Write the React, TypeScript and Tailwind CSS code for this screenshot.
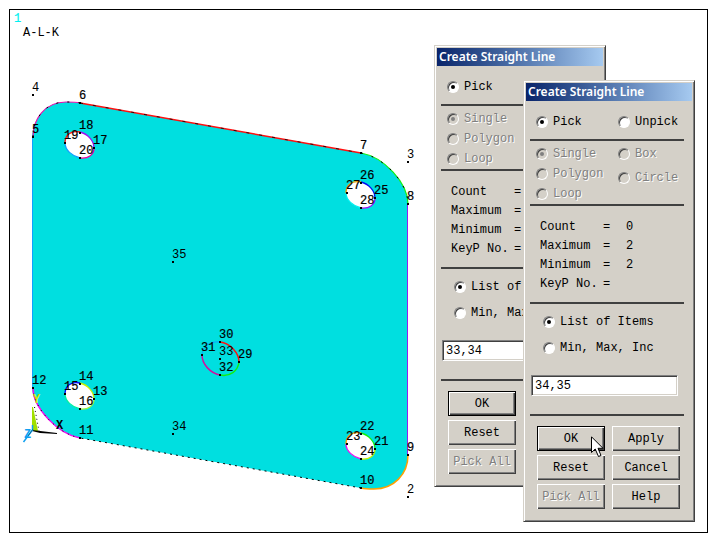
import React, { useId } from 'react';

interface PickerDialogProps {
  items: string;
  className: string;
}

interface RadioProps {
  name: string;
  label: string;
  checked?: boolean;
  disabled?: boolean;
}

const keypoints: [string, number, number][] = [
  ['2', 408, 497], ['3', 408, 162], ['4', 33, 95], ['5', 33, 137],
  ['6', 80, 103], ['7', 361, 153], ['8', 408, 204], ['9', 408, 455],
  ['10', 361, 488], ['11', 80, 438], ['12', 33, 388],
  ['13', 94, 399], ['14', 80, 384], ['15', 65, 394], ['16', 80, 409],
  ['17', 94, 148], ['18', 80, 133], ['19', 65, 143], ['20', 80, 158],
  ['21', 375, 449], ['22', 361, 434], ['23', 347, 444], ['24', 361, 459],
  ['25', 375, 198], ['26', 361, 183], ['27', 347, 193], ['28', 361, 208],
  ['29', 239, 362], ['30', 220, 342], ['31', 202, 355], ['32', 220, 375],
  ['33', 220, 359], ['34', 173, 434], ['35', 173, 262],
];

// Keypoints that belong to no line are drawn lighter
const freePoints = ['2', '3', '4', '33', '34', '35'];

// Arc colours run clockwise from the top keypoint of each hole
const holes = [
  { x: 80, y: 145, colors: ['#a010f0', '#f000a0', '#10a0ff', '#ff1010'] },
  { x: 80, y: 396, colors: ['#c8f000', '#a0f040', '#00f0a0', '#0000f0'] },
  { x: 361, y: 195, colors: ['#0010f0', '#a010f0', '#00f0f0', '#f0a000'] },
  { x: 361, y: 446, colors: ['#10f010', '#c8f000', '#f010f0', '#ffa000'] },
];

const holeArcs = [
  'M0 -13C8 -11 14 -4 14 3',
  'M14 3C14 10 8 14 0 13',
  'M0 13C-8 11 -15 5 -15 -2',
  'M-15 -2C-15 -10 -9 -15 0 -13',
];

const Model: React.FC = () => (
  <svg
    className="block h-[522px] w-[424px]"
    viewBox="10 10 424 522"
    fill="none"
    role="img"
    aria-label="Area model with keypoints"
  >
    <path
      fill="#00dfe0"
      d="M32 137C33 120 44 102 66 102C71 102 76 102 80 103L361 153C384 157 408 183 408 204V455C408 474 394 489 374 489C369 489 365 489 361 488L80 438C58 434 33 408 32 388Z"
    />

    {/* Outline */}
    <path stroke="#10a0ff" d="M32.5 137V388" />
    <path stroke="#f010b0" strokeWidth="1.2" d="M33 137C33 120 44 102 66 102C71 102 76 102 80 103" />
    <path stroke="#ff1010" strokeWidth="1.5" d="M80 103L361 153" />
    <path stroke="#10f010" strokeWidth="1.2" d="M361 153C384 157 408 183 408 204" />
    <path stroke="#9020f0" d="M407.5 204V455" />
    <path stroke="#ffa000" strokeWidth="1.5" d="M408 455C408 474 394 489 374 489C369 489 365 489 361 488" />
    <path stroke="#f010f0" strokeWidth="1.5" d="M80 438C58 434 33 408 33 388" />
    <path
      stroke="#000"
      strokeDasharray="2 9"
      d="M33 137C33 120 44 102 66 102C71 102 76 102 80 103M361 153C384 157 408 183 408 204"
    />
    <path stroke="#000" strokeWidth="0.8" strokeDasharray="3 10" d="M80 103L361 153" />
    <path stroke="#000" strokeDasharray="2 4" d="M361 488L80 438" />
    <path stroke="#000" strokeDasharray="1 5" d="M80 438C58 434 33 408 33 388" />

    {holes.map((hole) => (
      <g key={`${hole.x}-${hole.y}`} transform={`translate(${hole.x} ${hole.y})`}>
        <path fill="#fff" d="M0 -13C8 -11 14 -4 14 3C14 10 8 14 0 13C-8 11 -15 5 -15 -2C-15 -10 -9 -15 0 -13" />
        {holeArcs.map((d, i) => (
          <path key={d} d={d} stroke={hole.colors[i]} strokeWidth="1.3" />
        ))}
      </g>
    ))}

    {/* Inner circle */}
    <path stroke="#ff1010" strokeWidth="1.5" d="M220 342C230 343 239 353 239 362" />
    <path stroke="#10f010" strokeWidth="1.5" d="M239 362C238 371 230 377 220 375" />
    <path stroke="#d010a0" strokeWidth="1.5" d="M220 375C210 373 202 364 202 355" />
    <path stroke="#10a0ff" d="M202 355C203 346 209 341 220 342" />

    {/* Triad */}
    <path fill="#a0e000" d="M32 407H33L38 431H32Z" />
    <path stroke="#000" strokeDasharray="1 3" d="M34.5 407L39 431" />
    <path fill="#000" d="M32 430L57 433V434L40 433L32 431Z" />
    <path stroke="#10a0f0" strokeWidth="1.5" d="M32.5 425V430L23.5 442" />
    <path stroke="#1070a0" d="M33 429L28 436" />
    <g fontFamily="'Liberation Mono', monospace" fontSize="12" fontWeight="700">
      <text x="33" y="403" fill="#c4e800">Y</text>
      <text x="56" y="429" fill="#000">X</text>
      <text x="24" y="438" fill="#10a0f0">Z</text>
    </g>

    <g fontFamily="'Liberation Mono', monospace" fontSize="12" fill="#000">
      {keypoints.map(([label, x, y]) => (
        <g key={label}>
          <rect x={x - 1} y={y - 1} width="2" height="2" />
          <text
            x={x - 1}
            y={y - 4}
            stroke={freePoints.includes(label) ? 'none' : '#000'}
            strokeWidth="0.2"
          >
            {label}
          </text>
        </g>
      ))}
    </g>

    <text x="14" y="22" fontFamily="'Liberation Mono', monospace" fontSize="12" fill="#00f0f0" stroke="#00f0f0" strokeWidth="0.2">1</text>
    <text x="23" y="36" fontFamily="'Liberation Mono', monospace" fontSize="12" fill="#000">A-L-K</text>
  </svg>
);

const Radio: React.FC<RadioProps> = ({ name, label, checked, disabled }) => (
  <label className={`flex h-5 items-center gap-[5px] whitespace-nowrap ${disabled ? 'text-[#808080] [text-shadow:1px_1px_0_#fff]' : ''}`}>
    <input
      type="radio"
      name={name}
      defaultChecked={checked}
      disabled={disabled}
      className="grid size-3 shrink-0 appearance-none place-content-center rounded-full border border-t-[#808080] border-r-white border-b-white border-l-[#808080] bg-white shadow-[inset_1px_1px_0_#404040] before:size-1 before:rounded-full checked:before:bg-black disabled:bg-[#d4d0c8] disabled:checked:before:bg-[#808080]"
    />
    {label}
  </label>
);

const buttonClass =
  'h-[25px] whitespace-nowrap text-center shadow-[inset_1px_1px_0_#fff,inset_-1px_-1px_0_#404040,inset_-2px_-2px_0_#808080] disabled:text-[#808080] disabled:[text-shadow:1px_1px_0_#fff]';

const Divider: React.FC = () => <hr className="h-[2px] border-0 bg-[#404040]" />;

const PickerDialog: React.FC<PickerDialogProps> = ({ items, className }) => {
  const id = useId();

  return (
    <section
      className={`absolute w-[172px] border border-t-[#d4d0c8] border-r-[#404040] border-b-[#404040] border-l-[#d4d0c8] bg-[#d4d0c8] p-[2px] font-['Liberation_Mono',monospace] text-xs text-black shadow-[inset_1px_1px_0_#fff,inset_-1px_-1px_0_#808080] ${className}`}
    >
      <h2 className="h-[18px] bg-linear-to-r from-[#0a246a] to-[#a6caf0] pl-[2px] font-['Noto_Sans',sans-serif] text-xs leading-[18px] font-semibold whitespace-nowrap text-white">
        Create Straight Line
      </h2>

      <form className="pr-2 pl-1" onSubmit={(e) => e.preventDefault()}>
        <div className="grid grid-cols-[82px_1fr] pt-[11px] pb-[7px] pl-[6px]">
          <Radio name={`${id}-mode`} label="Pick" checked />
          <Radio name={`${id}-mode`} label="Unpick" />
        </div>
        <Divider />

        <div className="grid grid-cols-[82px_1fr] pt-[3px] pl-[6px]">
          <div>
            <Radio name={`${id}-shape`} label="Single" checked disabled />
            <Radio name={`${id}-shape`} label="Polygon" disabled />
            <Radio name={`${id}-shape`} label="Loop" disabled />
          </div>
          <div className="flex flex-col gap-1">
            <Radio name={`${id}-shape`} label="Box" disabled />
            <Radio name={`${id}-shape`} label="Circle" disabled />
          </div>
        </div>
        <Divider />

        <table className="mt-3 mb-2 ml-[10px] text-left leading-[19px]">
          <tbody>
            {[['Count', '0'], ['Maximum', '2'], ['Minimum', '2'], ['KeyP No.', '']].map(([name, value]) => (
              <tr key={name}>
                <th scope="row" className="w-[63px] p-0 font-normal whitespace-nowrap">{name}</th>
                <td className="w-[23px] p-0">=</td>
                <td className="p-0">{value}</td>
              </tr>
            ))}
          </tbody>
        </table>
        <Divider />

        <div className="flex flex-col gap-[6px] pt-2 pl-[13px]">
          <Radio name={`${id}-entry`} label="List of Items" checked />
          <Radio name={`${id}-entry`} label="Min, Max, Inc" />
        </div>
        <div className="pt-[17px] pr-[6px] pb-[18px] pl-px">
          <input
            type="text"
            aria-label="Items"
            defaultValue={items}
            className="block h-[21px] w-full border border-t-[#808080] border-r-white border-b-white border-l-[#808080] bg-white px-[3px] shadow-[inset_1px_1px_0_#404040,inset_-1px_-1px_0_#d4d0c8] outline-none"
          />
        </div>
        <Divider />

        <div className="grid grid-cols-2 gap-x-[7px] gap-y-1 pt-[10px] pr-1 pb-[10px] pl-[7px]">
          <button type="submit" className={`${buttonClass} border border-black`}>OK</button>
          <button type="button" className={buttonClass}>Apply</button>
          <button type="button" className={buttonClass}>Reset</button>
          <button type="button" className={buttonClass}>Cancel</button>
          <button type="button" className={buttonClass} disabled>Pick All</button>
          <button type="button" className={buttonClass}>Help</button>
        </div>
      </form>
    </section>
  );
};

export default function App() {
  return (
    <div className="flex min-h-screen bg-white pt-[9px] pr-3 pb-[13px] pl-[9px]">
      <main className="relative flex-1 border border-black">
        <Model />
        <PickerDialog items="33,34" className="top-[35px] left-[424px]" />
        <PickerDialog items="34,35" className="top-[70px] left-[513px]" />
        {/* Mouse pointer */}
        <svg className="pointer-events-none absolute top-[426px] left-[581px] h-[22px] w-[13px]" viewBox="0 0 13 22" aria-hidden="true">
          <path d="M.5 .8V16.5L4.2 13L7.5 20.5L10 19.5L7 12.3H12Z" fill="#fff" stroke="#000" />
        </svg>
      </main>
    </div>
  );
}
